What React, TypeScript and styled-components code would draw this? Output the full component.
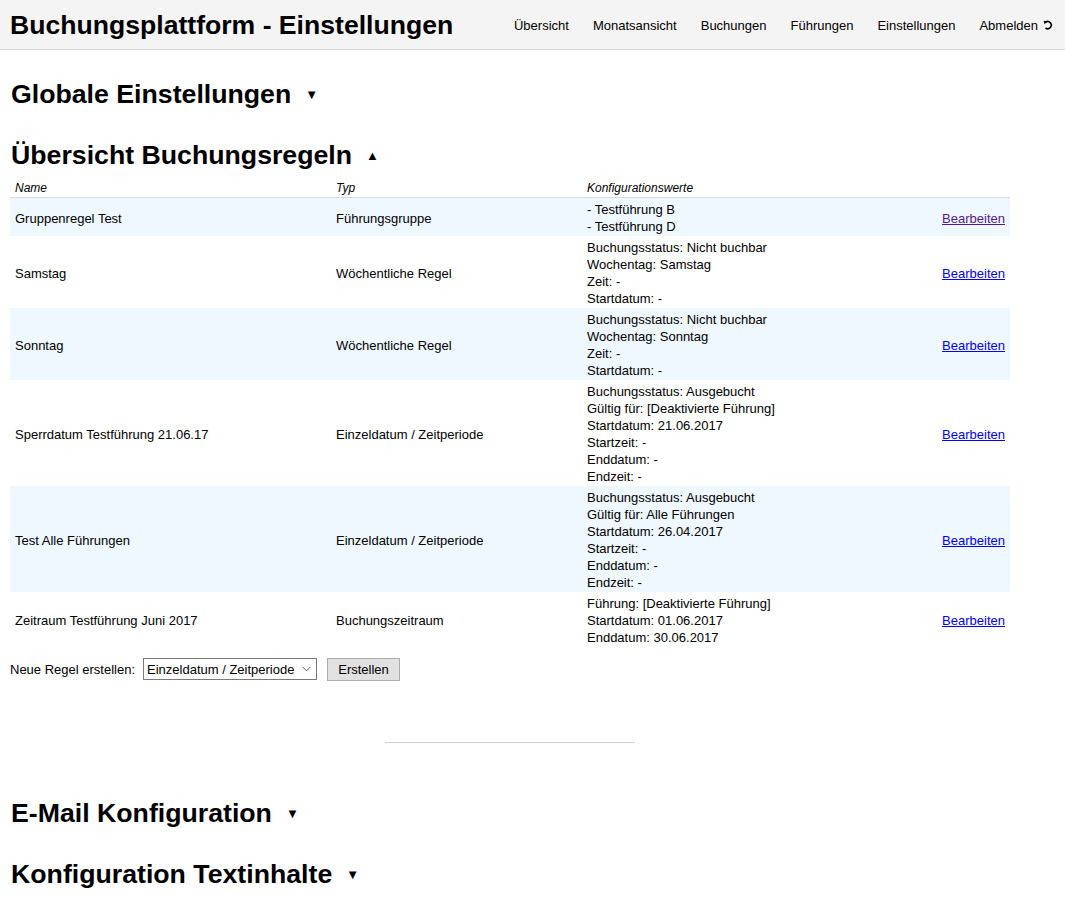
import React from "react";
import styled, { createGlobalStyle } from "styled-components";

const Global = createGlobalStyle`
  html, body { margin: 0; padding: 0; background: #fff; }
  body { font-family: "Liberation Sans", Arial, sans-serif; font-size: 13px; color: #000; }
`;

const Header = styled.header`
  height: 50px;
  box-sizing: border-box;
  background: #f4f4f4;
  border-bottom: 1px solid #d6d6d6;
  display: flex;
  align-items: center;
  justify-content: space-between;
  padding: 1px 12px 0 10px;
`;

const Title = styled.h1`
  margin: 0;
  font-size: 26.6px;
  font-weight: bold;
`;

const Nav = styled.nav`
  display: flex;
  align-items: center;
  gap: 24px;
`;

const NavItem = styled.a`
  color: #000;
  text-decoration: none;
  font-size: 13px;
  display: inline-flex;
  align-items: center;
  gap: 5px;
`;

const Main = styled.main`
  width: 1000px;
  padding: 29px 0 0 10px;
`;

const SectionHeading = styled.h2<{ $after: number }>`
  margin: 0 0 ${(p) => p.$after}px 1px;
  font-size: 26.7px;
  line-height: 30px;
  font-weight: bold;
  display: flex;
  align-items: center;
  gap: 14px;
`;

const Arrow = styled.span`
  font-size: 13px;
  line-height: 1;
`;

const Table = styled.table`
  width: 1000px;
  border-collapse: collapse;
  table-layout: fixed;
`;

const Th = styled.th`
  font-style: italic;
  font-weight: normal;
  text-align: left;
  font-size: 12px;
  padding: 2px 5px 2px;
  height: 15px;
  border-bottom: 1px solid #d3dbe3;
`;

const Row = styled.tr<{ $shaded: boolean }>`
  background: ${(p) => (p.$shaded ? "#eff7ff" : "#fff")};
`;

const Td = styled.td<{ $right?: boolean }>`
  padding: 3px 5px 1px;
  line-height: 17px;
  vertical-align: middle;
  text-align: ${(p) => (p.$right ? "right" : "left")};
`;

const EditLink = styled.a<{ $visited?: boolean }>`
  color: ${(p) => (p.$visited ? "#551a8b" : "#0000ee")};
  text-decoration: underline;
`;

const Form = styled.div`
  margin-top: 10px;
  display: flex;
  align-items: center;
  height: 24px;
`;

const Label = styled.label`
  font-size: 13px;
  margin-right: 8px;
`;

const SelectWrap = styled.div`
  position: relative;
  width: 174px;
  height: 22px;
`;

const Select = styled.select`
  appearance: none;
  -webkit-appearance: none;
  width: 174px;
  height: 22px;
  box-sizing: border-box;
  font-family: "Liberation Sans", Arial, sans-serif;
  font-size: 13px;
  color: #000;
  border: 1px solid #7a7a7a;
  border-radius: 0;
  background: #fff;
  padding: 0 18px 0 3px;
  margin: 0;
  outline: none;
`;

const Chevron = styled.svg`
  position: absolute;
  right: 6px;
  top: 8px;
  pointer-events: none;
`;

const Button = styled.button`
  margin-left: 10px;
  width: 73px;
  height: 23px;
  font-family: "Liberation Sans", Arial, sans-serif;
  font-size: 13px;
  color: #000;
  background: #e1e1e1;
  border: 1px solid #adadad;
  border-radius: 0;
  padding: 0;
`;

const Divider = styled.hr`
  width: 250px;
  margin: 61px auto 55px;
  border: 0;
  border-top: 1px solid #d0d0d0;
  height: 0;
`;

const LogoutIcon = () => (
  <svg width="10" height="10" viewBox="0 0 10 10">
    <path d="M2.5 2.2 A3.6 3.6 0 1 1 2.5 8" fill="none" stroke="#000" strokeWidth="1.6" />
    <path d="M0.6 0.8 L4.2 1.6 L1.6 4.2 Z" fill="#000" />
  </svg>
);

type Rule = { name: string; typ: string; values: string[] };

const rules: Rule[] = [
  { name: "Gruppenregel Test", typ: "Führungsgruppe", values: ["- Testführung B", "- Testführung D"] },
  {
    name: "Samstag",
    typ: "Wöchentliche Regel",
    values: ["Buchungsstatus: Nicht buchbar", "Wochentag: Samstag", "Zeit: -", "Startdatum: -"],
  },
  {
    name: "Sonntag",
    typ: "Wöchentliche Regel",
    values: ["Buchungsstatus: Nicht buchbar", "Wochentag: Sonntag", "Zeit: -", "Startdatum: -"],
  },
  {
    name: "Sperrdatum Testführung 21.06.17",
    typ: "Einzeldatum / Zeitperiode",
    values: [
      "Buchungsstatus: Ausgebucht",
      "Gültig für: [Deaktivierte Führung]",
      "Startdatum: 21.06.2017",
      "Startzeit: -",
      "Enddatum: -",
      "Endzeit: -",
    ],
  },
  {
    name: "Test Alle Führungen",
    typ: "Einzeldatum / Zeitperiode",
    values: [
      "Buchungsstatus: Ausgebucht",
      "Gültig für: Alle Führungen",
      "Startdatum: 26.04.2017",
      "Startzeit: -",
      "Enddatum: -",
      "Endzeit: -",
    ],
  },
  {
    name: "Zeitraum Testführung Juni 2017",
    typ: "Buchungszeitraum",
    values: ["Führung: [Deaktivierte Führung]", "Startdatum: 01.06.2017", "Enddatum: 30.06.2017"],
  },
];

export default function App() {
  return (
    <>
      <Global />
      <Header>
        <Title>Buchungsplattform - Einstellungen</Title>
        <Nav>
          <NavItem href="#">Übersicht</NavItem>
          <NavItem href="#">Monatsansicht</NavItem>
          <NavItem href="#">Buchungen</NavItem>
          <NavItem href="#">Führungen</NavItem>
          <NavItem href="#">Einstellungen</NavItem>
          <NavItem href="#">
            Abmelden <LogoutIcon />
          </NavItem>
        </Nav>
      </Header>
      <Main>
        <SectionHeading $after={31}>
          Globale Einstellungen <Arrow>▼</Arrow>
        </SectionHeading>
        <SectionHeading $after={8}>
          Übersicht Buchungsregeln <Arrow>▲</Arrow>
        </SectionHeading>
        <Table>
          <colgroup>
            <col style={{ width: 321 }} />
            <col style={{ width: 251 }} />
            <col style={{ width: 300 }} />
            <col />
          </colgroup>
          <thead>
            <tr>
              <Th>Name</Th>
              <Th>Typ</Th>
              <Th>Konfigurationswerte</Th>
              <Th />
            </tr>
          </thead>
          <tbody>
            {rules.map((r, i) => (
              <Row key={r.name} $shaded={i % 2 === 0}>
                <Td>{r.name}</Td>
                <Td>{r.typ}</Td>
                <Td>
                  {r.values.map((v) => (
                    <div key={v}>{v}</div>
                  ))}
                </Td>
                <Td $right>
                  <EditLink href="#" $visited={i === 0}>
                    Bearbeiten
                  </EditLink>
                </Td>
              </Row>
            ))}
          </tbody>
        </Table>
        <Form>
          <Label>Neue Regel erstellen:</Label>
          <SelectWrap>
            <Select defaultValue="einzel">
              <option value="einzel">Einzeldatum / Zeitperiode</option>
              <option value="woche">Wöchentliche Regel</option>
              <option value="gruppe">Führungsgruppe</option>
              <option value="zeitraum">Buchungszeitraum</option>
            </Select>
            <Chevron width="9" height="6" viewBox="0 0 9 6">
              <path d="M0.5 0.8 L4.5 4.8 L8.5 0.8" fill="none" stroke="#555" strokeWidth="1" />
            </Chevron>
          </SelectWrap>
          <Button>Erstellen</Button>
        </Form>
        <Divider />
        <SectionHeading $after={31}>
          E-Mail Konfiguration <Arrow>▼</Arrow>
        </SectionHeading>
        <SectionHeading $after={0}>
          Konfiguration Textinhalte <Arrow>▼</Arrow>
        </SectionHeading>
      </Main>
    </>
  );
}
